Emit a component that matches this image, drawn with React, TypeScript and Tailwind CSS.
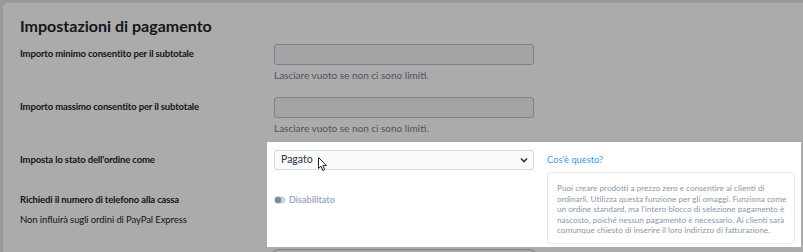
export default function App() {
  return (
    <div
      className="relative w-[803px] h-[252px] overflow-hidden bg-[#e6e6e6] pt-[3px] pl-[3px]"
      style={{ fontFamily: 'Lato, "Open Sans", sans-serif' }}
    >
      <div className="h-[300px] rounded-tl-[5px] bg-white pl-[17px] pt-[12px]">
        <h2 className="text-[16px] leading-[22px] font-bold text-[#1d2327]">Impostazioni di pagamento</h2>

        {/* Importo minimo */}
        <div className="mt-[7px] flex items-center">
          <div className="w-[254px] text-[9.5px] font-bold tracking-[-0.15px] text-[#1d2327]">Importo minimo consentito per il subtotale</div>
          <div className="w-[260px] h-[21px] rounded-[3px] border border-[#b8c2cc] bg-[#f4f5f7]" />
        </div>
        <div className="ml-[254px] mt-[4px] text-[10px] leading-[12px] text-[#718096]">Lasciare vuoto se non ci sono limiti.</div>

        {/* Importo massimo */}
        <div className="mt-[16px] flex items-center">
          <div className="w-[254px] text-[9.5px] font-bold tracking-[-0.15px] text-[#1d2327]">Importo massimo consentito per il subtotale</div>
          <div className="w-[260px] h-[21px] rounded-[3px] border border-[#b8c2cc] bg-[#f4f5f7]" />
        </div>
        <div className="ml-[254px] mt-[4px] text-[10px] leading-[12px] text-[#718096]">Lasciare vuoto se non ci sono limiti.</div>

        {/* Stato ordine + telefono */}
        <div className="mt-[16px] flex">
          <div className="w-[254px] text-[#1d2327]">
            <div className="h-[20px] flex items-center text-[9.5px] font-bold tracking-[-0.15px]">Imposta lo stato dell'ordine come</div>
            <div className="mt-[23px] h-[14px] flex items-center text-[9.5px] font-bold tracking-[-0.15px]">Richiedi il numero di telefono alla cassa</div>
            <div className="mt-[6px] h-[14px] flex items-center text-[9.5px] tracking-[-0.1px]">Non influirà sugli ordini di PayPal Express</div>
          </div>
          <div className="w-[260px]">
            <div className="h-[20px] flex items-center justify-between rounded-[2px] border border-[#d5dce3] bg-[#f9fafb] pl-[6px] pr-[5px] text-[10.5px] text-[#2d3748]">
              <span>Pagato</span>
              <svg width="8" height="6" viewBox="0 0 8 6">
                <path d="M1 1.5 L4 4.5 L7 1.5" fill="none" stroke="#333" strokeWidth="1.6" />
              </svg>
            </div>
            <div className="mt-[23px] h-[14px] flex items-center gap-[3px]">
              <svg width="12" height="8" viewBox="0 0 12 8">
                <rect x="0.5" y="0.5" width="11" height="7" rx="3.5" fill="#cbd3dd" />
                <circle cx="4" cy="4" r="3.2" fill="#7f8b9c" />
              </svg>
              <span className="text-[9px] font-bold text-[#a0abbb]">Disabilitato</span>
            </div>
          </div>
          <div className="ml-[13px] w-[248px]">
            <div className="h-[20px] flex items-center text-[9.3px] text-[#3b97e3]">Cos'è questo?</div>
            <div className="mt-[2px] h-[72px] rounded-[4px] border border-[#e2e8f0] bg-white pl-[9px] pt-[10px] text-[8.2px] leading-[10.5px] whitespace-nowrap text-[#8b97aa]">
              Puoi creare prodotti a prezzo zero e consentire ai clienti di<br />
              ordinarli. Utilizza questa funzione per gli omaggi. Funziona come<br />
              un ordine standard, ma l'intero blocco di selezione pagamento è<br />
              nascosto, poiché nessun pagamento è necessario. Ai clienti sarà<br />
              comunque chiesto di inserire il loro indirizzo di fatturazione.
            </div>
          </div>
        </div>

        {/* Campo successivo */}
        <div className="mt-[5px] ml-[254px] w-[260px] h-[21px] rounded-[3px] border border-[#b8c2cc] bg-[#f4f5f7] px-[6px] pt-[1px] text-[9px] leading-[12px] text-[#9aa5b3]">
          Lasciare vuoto per usare il valore predefinito
        </div>
      </div>

      {/* Spotlight overlay */}
      <div className="pointer-events-none absolute left-[267px] top-[142px] w-[534px] h-[105px] shadow-[0_0_0_9999px_rgba(0,0,0,0.33)]" />

      {/* Mouse cursor */}
      <svg className="pointer-events-none absolute left-[318px] top-[157px]" width="10" height="15" viewBox="0 0 10 15">
        <path d="M0.5 0.5 L0.5 11.5 L3 9.2 L4.8 13.5 L6.6 12.7 L4.9 8.6 L8.5 8.6 Z" fill="white" stroke="#222" strokeWidth="1" strokeLinejoin="round" />
      </svg>
    </div>
  );
}
